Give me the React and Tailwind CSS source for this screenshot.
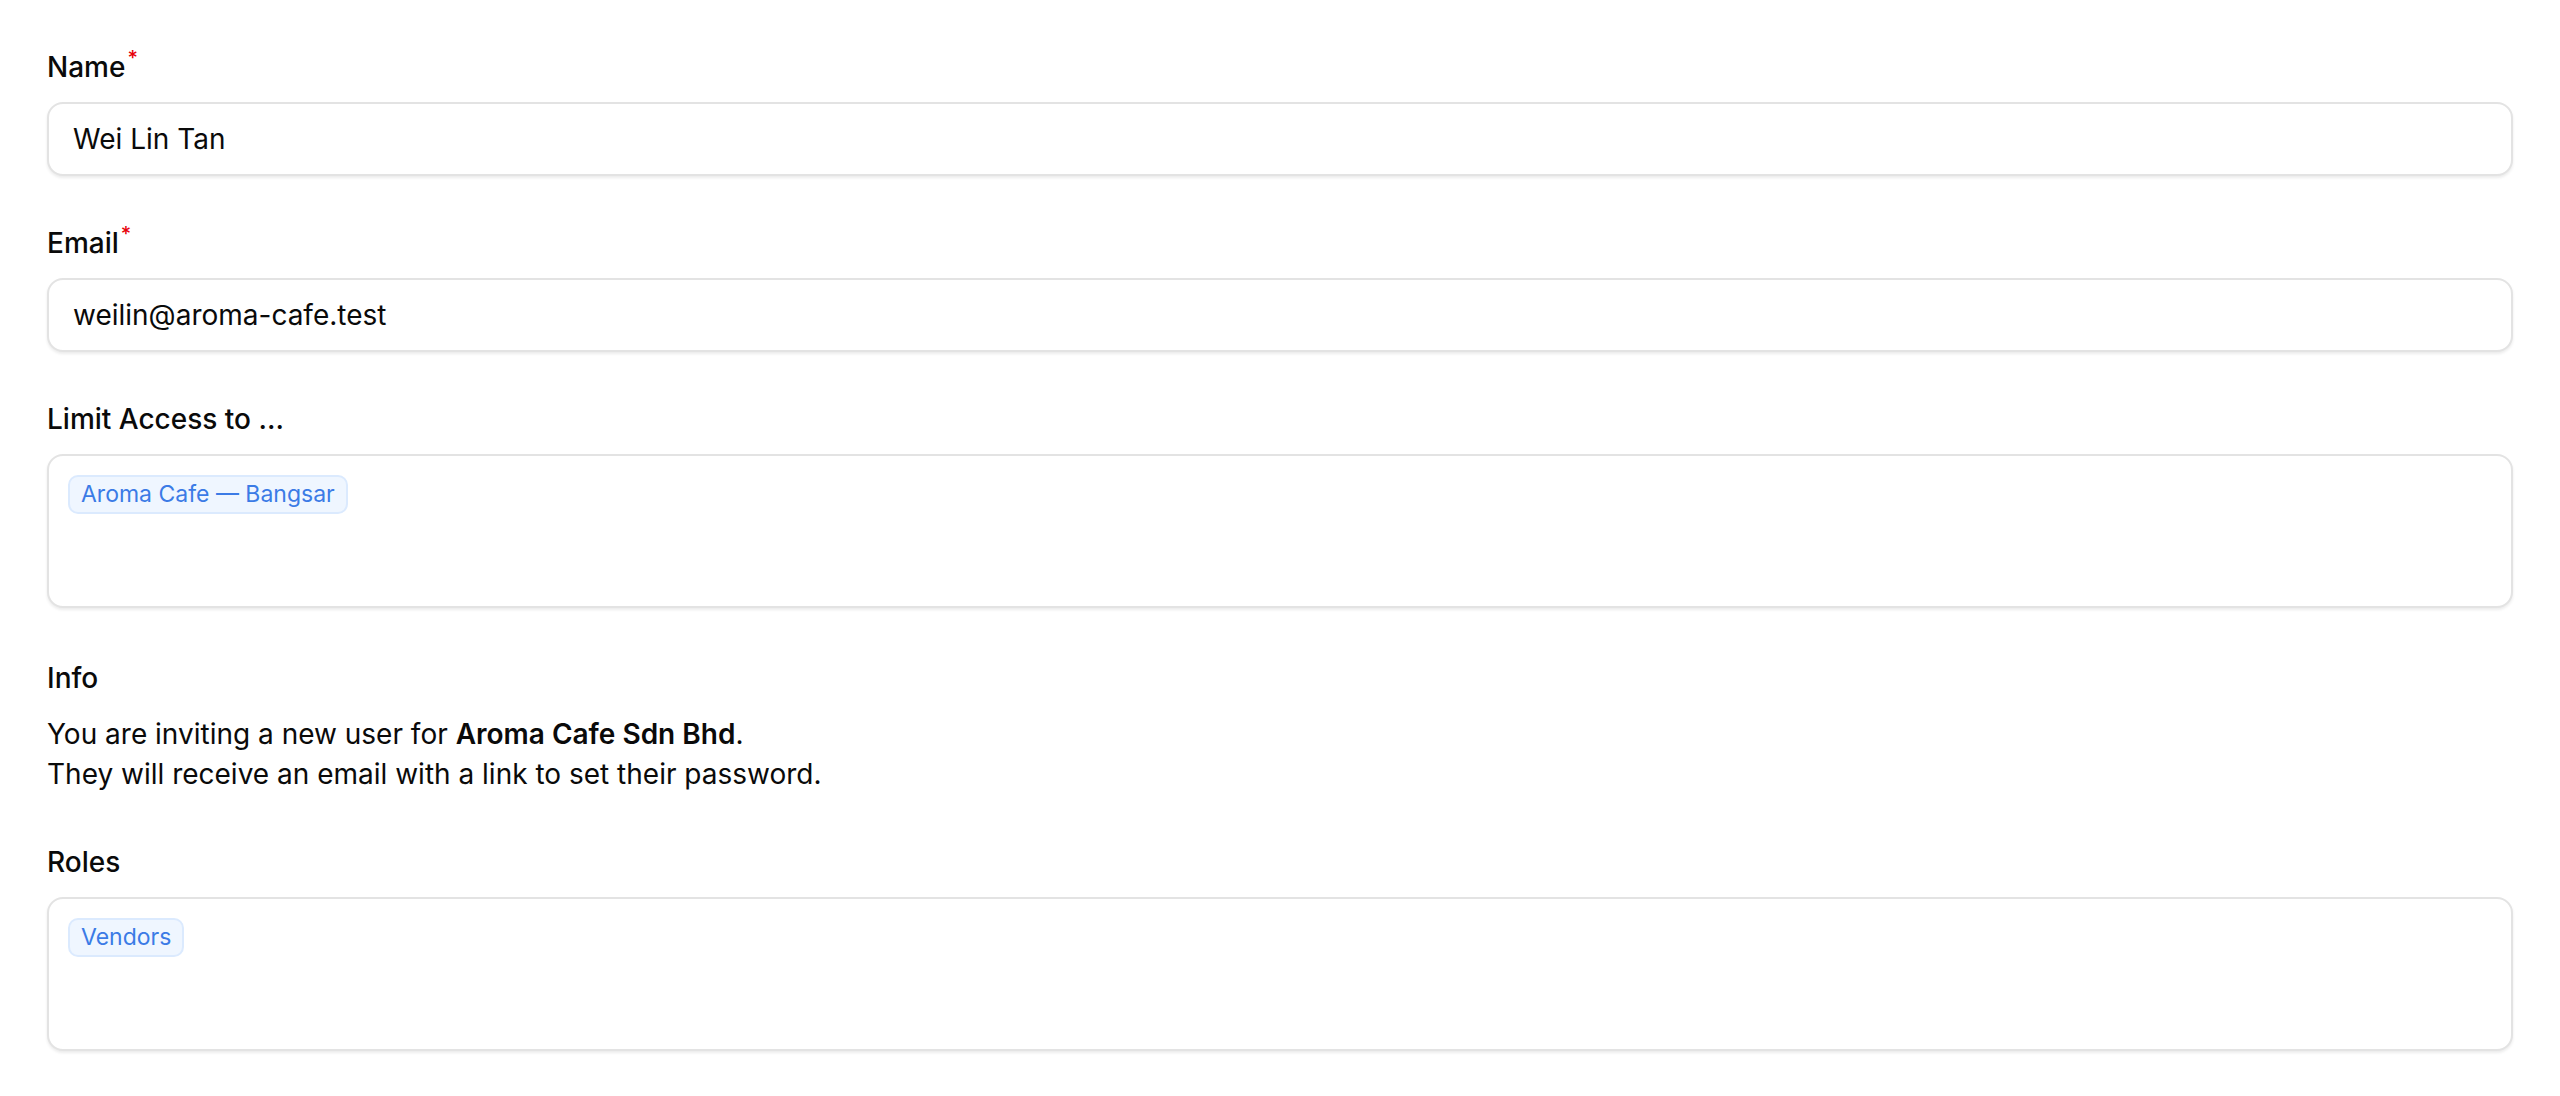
const Label = ({ children, required, className = "" }) => (
  <div className={`h-[40px] text-[28px] leading-[40px] font-medium text-[#0a0a0a] ${className}`}>
    {children}
    {required && (
      <span className="relative -top-[12px] ml-[2px] text-[20px] leading-none text-[#e7000b]">*</span>
    )}
  </div>
);

const Chip = ({ children }) => (
  <span className="inline-flex h-[39px] items-center rounded-[10px] border-2 border-[#dbeafe] bg-[#eff6ff] px-[11px] text-[23px] leading-none text-[#3b7be6]">
    {children}
  </span>
);

const TextInput = ({ value }) => (
  <div className="flex h-[74px] items-center rounded-[16px] border-2 border-[#e3e3e3] bg-white px-[24px] text-[28px] text-[#0a0a0a] shadow-[0_2px_3px_rgba(0,0,0,0.08)]">
    {value}
  </div>
);

const TagBox = ({ tags }) => (
  <div className="flex h-[154px] flex-wrap content-start items-start gap-2 rounded-[16px] border-2 border-[#e3e3e3] bg-white p-[19px] shadow-[0_2px_3px_rgba(0,0,0,0.08)]">
    {tags.map((t) => (
      <Chip key={t}>{t}</Chip>
    ))}
  </div>
);

export default function App() {
  return (
    <div
      className="min-h-screen bg-white px-[47px] pt-[47px]"
      style={{ fontFamily: "Inter, 'Noto Sans', sans-serif" }}
    >
      <div className="flex flex-col">
        <div>
          <Label required className="mb-[15px]">Name</Label>
          <TextInput value="Wei Lin Tan" />
        </div>

        <div className="mt-[47px]">
          <Label required className="mb-[15px]">Email</Label>
          <TextInput value="weilin@aroma-cafe.test" />
        </div>

        <div className="mt-[47px]">
          <Label className="mb-[15px]">Limit Access to ...</Label>
          <TagBox tags={["Aroma Cafe — Bangsar"]} />
        </div>

        <div className="mt-[50px]">
          <Label className="mb-[16px]">Info</Label>
          <div className="text-[28px] leading-[40px] text-[#0a0a0a]">
            <p>
              You are inviting a new user for <strong className="font-semibold">Aroma Cafe Sdn Bhd</strong>.
            </p>
            <p>They will receive an email with a link to set their password.</p>
          </div>
        </div>

        <div className="mt-[48px]">
          <Label className="mb-[15px]">Roles</Label>
          <TagBox tags={["Vendors"]} />
        </div>
      </div>
    </div>
  );
}
